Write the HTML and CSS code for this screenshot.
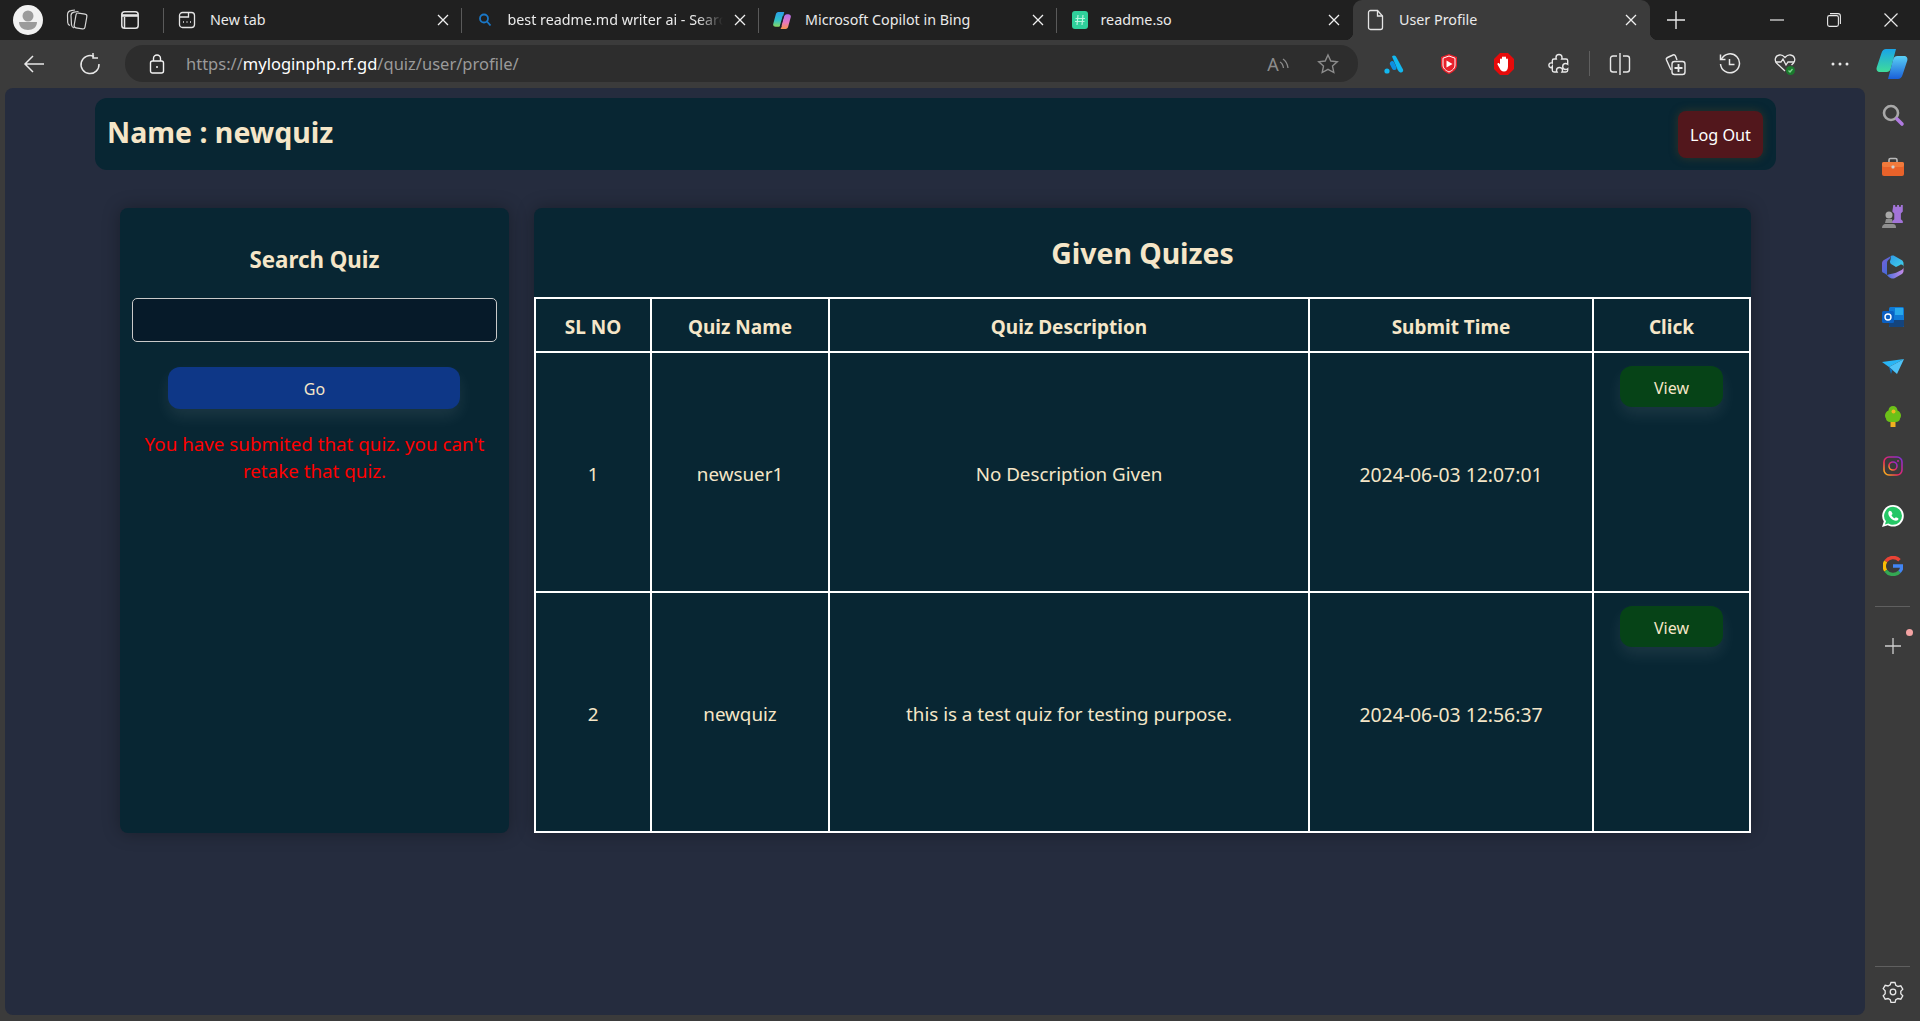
FILE: index.html
```html
<!DOCTYPE html>
<html>
  <head>
    <meta charset="utf-8" />
    <title>User Profile</title>
    <meta name="viewport" content="width=device-width, initial-scale=1" />
    <link rel="stylesheet" href="styles.css">
  </head>
  <body>
    <div class="browser">
      <!-- Tab strip -->
      <div class="tabbar">
        <div class="win-left">
          <svg width="30" height="30" viewBox="0 0 30 30"><circle cx="15" cy="15" r="15" fill="#f2f2f2"/><circle cx="15" cy="11" r="5.5" fill="#9b9b9b"/><path d="M6 17h18c0 5-4 8-9 8s-9-3-9-8z" fill="#9b9b9b"/></svg>
          <svg width="24" height="24" viewBox="0 0 24 24" fill="none" stroke="#d6d6d6" stroke-width="1.2"><rect x="10" y="5.500" width="11" height="15" rx="2.200" transform="rotate(10 15.500 13)"/><path d="M9 20C7.500 19.500 6.800 18.500 6.500 17L6 7.500C6 5.500 7.500 4.500 9 4.200L13.500 3.500"/><path d="M5 17.500C3.500 17 2.800 16 2.700 14.500L2.500 7C2.500 4.500 4 3 6 2.700L10 2"/></svg>
          <svg width="22" height="22" viewBox="0 0 22 22" fill="none" stroke="#e4e4e4" stroke-width="1.500"><rect x="2.800" y="2.800" width="16.400" height="16.400" rx="2.800"/><path d="M3 6.500h16" stroke-width="2.600"/><path d="M5.500 8v11"/></svg>
        </div>

        <div class="tab-sep"></div>
        <div class="tab">
          <svg class="tab-icon" width="18" height="18" viewBox="0 0 18 18" fill="none" stroke="#e4e4e4" stroke-width="1.3"><rect x="1.5" y="1.5" width="15" height="15" rx="3"/><path d="M1.5 6h9V1.5"/><path d="M5 11h1M8.5 11h1M12 11h1" stroke-width="1.6"/></svg>
          <span class="tab-title">New tab</span>
          <span class="tab-close"><svg width="12" height="12" viewBox="0 0 12 12" stroke="#f0f0f0" stroke-width="1.3"><path d="M1 1l10 10M11 1 1 11"/></svg></span>
        </div>

        <div class="tab-sep"></div>
        <div class="tab">
          <svg class="tab-icon" width="18" height="18" viewBox="0 0 18 18" fill="none" stroke="#1a78c8" stroke-width="1.8"><circle cx="8" cy="7.5" r="4"/><path d="M11 10.5l3.5 4"/></svg>
          <span class="tab-title tab-title-fade">best readme.md writer ai - Search</span>
          <span class="tab-close"><svg width="12" height="12" viewBox="0 0 12 12" stroke="#f0f0f0" stroke-width="1.3"><path d="M1 1l10 10M11 1 1 11"/></svg></span>
        </div>

        <div class="tab-sep"></div>
        <div class="tab">
          <svg class="tab-icon" width="21" height="21" viewBox="0 0 20 20">
            <defs>
              <linearGradient id="cp1" x1="0" y1="0" x2="0" y2="1"><stop offset="0" stop-color="#2a9fe8"/><stop offset=".55" stop-color="#2fc0c8"/><stop offset="1" stop-color="#8ad860"/></linearGradient>
              <linearGradient id="cp2" x1="0" y1="0" x2="0" y2="1"><stop offset="0" stop-color="#b06ee8"/><stop offset=".55" stop-color="#e878c0"/><stop offset="1" stop-color="#f7954a"/></linearGradient>
            </defs>
            <path d="M14 19.500H8.500l3.500-13C12.500 4.500 13.500 3 15.500 3H17c2 0 3.300 1.500 2.700 3.500L17 16.500C16.500 18.500 15.500 19.500 14 19.500z" fill="url(#cp2)"/>
            <path d="M6 .5h6.500L9 13.500C8.500 15.500 7.500 17 5.500 17H3C1 17 -.3 15.500 .3 13.500L3 3.500C3.500 1.500 4.500 .5 6 .5z" fill="url(#cp1)"/>
            <path d="M11.500 5 8.500 15.500c-.3 1 .2 1.500 1 1.500" fill="none" stroke="#1a1a2a" stroke-width="1.400"/>
          </svg>
          <span class="tab-title">Microsoft Copilot in Bing</span>
          <span class="tab-close"><svg width="12" height="12" viewBox="0 0 12 12" stroke="#f0f0f0" stroke-width="1.3"><path d="M1 1l10 10M11 1 1 11"/></svg></span>
        </div>

        <div class="tab-sep"></div>
        <div class="tab tab-readme">
          <svg class="tab-icon" width="16" height="18" viewBox="0 0 16 18"><rect width="16" height="18" rx="3" fill="#2fd09b"/><path d="M6 4 5 14M11 4l-1 10M3.500 7.500h9.500M3 10.500h9.500" stroke="#b5f3dd" stroke-width="1.2"/></svg>
          <span class="tab-title">readme.so</span>
          <span class="tab-close"><svg width="12" height="12" viewBox="0 0 12 12" stroke="#f0f0f0" stroke-width="1.3"><path d="M1 1l10 10M11 1 1 11"/></svg></span>
        </div>

        <div class="tab tab-active">
          <svg class="tab-icon" width="18" height="22" viewBox="0 0 18 22" fill="none" stroke="#e4e4e4" stroke-width="1.3"><path d="M3.500 1.500h7l5 5.500v11.500c0 1-.8 2-2 2h-10c-1.200 0-2-1-2-2v-15c0-1 .8-2 2-2z"/><path d="M10.500 1.500V7h5"/></svg>
          <span class="tab-title">User Profile</span>
          <span class="tab-close"><svg width="12" height="12" viewBox="0 0 12 12" stroke="#f0f0f0" stroke-width="1.3"><path d="M1 1l10 10M11 1 1 11"/></svg></span>
        </div>

        <div class="new-tab">
          <svg width="18" height="18" viewBox="0 0 18 18" stroke="#e8e8e8" stroke-width="1.4"><path d="M9 0v18M0 9h18"/></svg>
        </div>

        <div class="win-controls">
          <span><svg width="14" height="14" viewBox="0 0 14 14" stroke="#e8e8e8" stroke-width="1.2"><path d="M0 7h14"/></svg></span>
          <span><svg width="14" height="14" viewBox="0 0 14 14" fill="none" stroke="#e8e8e8" stroke-width="1.1"><rect x=".6" y="2.600" width="10.800" height="10.800" rx="1.800"/><path d="M3 .6h8c1.500 0 2.400 1 2.400 2.400v8"/></svg></span>
          <span><svg width="14" height="14" viewBox="0 0 14 14" stroke="#e8e8e8" stroke-width="1.2"><path d="M.5.5l13 13M13.500.5l-13 13"/></svg></span>
        </div>
      </div>

      <!-- Address bar and extensions -->
      <div class="toolbar">
        <div class="nav-slot nav-back">
          <svg width="22" height="20" viewBox="0 0 22 20" fill="none" stroke="#e8e8e8" stroke-width="1.5"><path d="M21 10H2M10 2l-8 8 8 8"/></svg>
        </div>
        <div class="nav-slot nav-reload">
          <svg width="22" height="22" viewBox="0 0 22 22" fill="none" stroke="#e8e8e8" stroke-width="1.5"><path d="M15 3.500A9 9 0 1 0 20 11"/><path d="M14 0v5h5"/></svg>
        </div>

        <div class="address">
          <svg class="address-lock" width="16" height="20" viewBox="0 0 16 20" fill="none" stroke="#f2f2f2" stroke-width="1.4"><rect x="1.500" y="7" width="13" height="12" rx="2"/><path d="M4.500 7V4.500a3.500 3.500 0 0 1 7 0V7"/><circle cx="8" cy="13" r="1" fill="#f2f2f2" stroke="none"/></svg>
          <span class="url">https://<b>myloginphp.rf.gd</b>/quiz/user/profile/</span>
          <span class="address-action">
            <span class="read-aloud">A</span>
            <svg width="10" height="14" viewBox="0 0 10 14" fill="none" stroke="#8c8c8c" stroke-width="1.300"><path d="M1 5c2 1 3 3 3.500 6M4 2c3 2 4.500 5 5 9"/></svg>
          </span>
          <span class="address-action">
            <svg width="22" height="22" viewBox="0 0 22 22" fill="none" stroke="#8c8c8c" stroke-width="1.400"><path d="M11 2l2.800 6 6.500.7-4.800 4.400 1.300 6.400L11 16.300l-5.800 3.200 1.300-6.400L1.700 8.700 8.200 8z"/></svg>
          </span>
        </div>

        <div class="ext-slot">
          <svg width="20" height="22" viewBox="0 0 20 22"><path d="M8 3.500c1-1.500 3-1.500 4 0l7 13c1 2-1.500 4-3.500 2.500-1-.8-1.500-1.500-2-2.500z" fill="#12b8f0"/><path d="M6.500 9c1-1.500 3-1 3.800.5l2 4.500c.7 2-.5 3.500-2.500 3-1-.3-1.500-1-2-2l-1.800-3.500c-.4-.8-.2-1.700.5-2.500z" fill="#0c8fe0"/><circle cx="3" cy="18" r="2.600" fill="#12b8f0"/></svg>
        </div>
        <div class="ext-slot">
          <svg width="18" height="22" viewBox="0 0 18 22"><path d="M9 1l8 3v8c0 4-3 7-8 9-5-2-8-5-8-9V4z" fill="#e8202a"/><path d="M9 3l6 2.200V12c0 3-2.200 5.300-6 7-3.800-1.700-6-4-6-7V5.200z" fill="none" stroke="#fff" stroke-width="1"/><path d="M6.500 7.500v7l6-3.500z" fill="#fff"/></svg>
        </div>
        <div class="ext-slot">
          <svg width="22" height="24" viewBox="0 0 22 24"><path d="M7 1h8l6 6v10l-6 6H7l-6-6V7z" fill="#e60a0a"/><path d="M7 12V7.500a1 1 0 0 1 2 0V5.500a1 1 0 0 1 2 0v0a1 1 0 0 1 2 0v2a1 1 0 0 1 2 0v7c0 3-1.500 5-4 5s-3.500-1.500-4.500-3.500L4.500 12.500c-.5-1 1-2 1.700-1z" fill="#fff"/></svg>
        </div>
        <div class="ext-slot">
          <svg width="22" height="22" viewBox="0 0 22 22" fill="none" stroke="#e8e8e8" stroke-width="1.400"><path d="M8 4.500C8 2.500 9.500 1.500 11 1.500s3 1 3 3c0 .5 0 1-.3 1.500H18c1 0 1.700.7 1.700 1.700v3.600c-.8-.6-1.300-.8-2-.8-1.700 0-3 1.300-3 3s1.300 3 3 3c.7 0 1.200-.2 2-.8v1.600c0 1-.7 1.700-1.700 1.700h-4c.4-.6.500-1 .5-1.700 0-1.600-1.300-2.800-3-2.800s-3 1.200-3 2.800c0 .7.100 1.100.5 1.700H6c-1 0-1.700-.7-1.700-1.700v-4C3.500 14.600 3 15 2.500 14.500 1 14 .8 12.500 1 11.500c.3-1.200 1.500-2 3.300-1.500V7.700C4.300 6.700 5 6 6 6h2.300C8.100 5.500 8 5 8 4.500z"/></svg>
        </div>
        <div class="toolbar-sep"></div>
        <div class="ext-slot">
          <svg width="22" height="22" viewBox="0 0 22 22" fill="none" stroke="#e8e8e8" stroke-width="1.400"><path d="M8 3H4C2.500 3 1.500 4 1.500 5.500v11C1.500 18 2.500 19 4 19h4M14 3h4c1.500 0 2.500 1 2.500 2.500v11c0 1.500-1 2.500-2.500 2.500h-4M11 0v22"/></svg>
        </div>
        <div class="ext-slot">
          <svg width="24" height="24" viewBox="0 0 24 24" fill="none" stroke="#e8e8e8" stroke-width="1.400"><path d="M8 18 3.500 8c-.5-1.200 0-2 1-2.500L10 3c1-.4 2 0 2.500 1l1.500 4"/><rect x="9" y="9.500" width="13" height="13" rx="2.500"/><path d="M15.500 12v8M11.500 16h8" stroke-width="1.800"/></svg>
        </div>
        <div class="ext-slot">
          <svg width="22" height="22" viewBox="0 0 22 22" fill="none" stroke="#e8e8e8" stroke-width="1.500"><path d="M2.500 6A9.500 9.500 0 1 1 1.500 11"/><path d="M1.500 1.500v5h5M10.500 6v5.500h5"/></svg>
        </div>
        <div class="ext-slot">
          <svg width="24" height="24" viewBox="0 0 24 24" fill="none" stroke="#e8e8e8" stroke-width="1.300"><path d="M12 19 3.500 11C1 8 2.500 3.500 6.500 3c2.300-.3 4 .8 5.500 2.500C13.500 3.800 15.200 2.700 17.500 3c4 .5 5.500 5 3 8l-2 2"/><path d="M2.500 10H8l2-3 3 6 2-3h6"/><circle cx="17.500" cy="18.500" r="4.500" fill="#1a7a2d" stroke="none"/><path d="M15.500 18.500l1.500 1.500 2.500-3" stroke="#7fd48f"/></svg>
        </div>
        <div class="ext-slot">
          <svg width="18" height="4" viewBox="0 0 18 4" fill="#e8e8e8"><circle cx="2" cy="2" r="1.500"/><circle cx="9" cy="2" r="1.500"/><circle cx="16" cy="2" r="1.500"/></svg>
        </div>
        <div class="copilot-slot">
          <svg width="32" height="32" viewBox="0 0 32 32">
            <defs>
              <linearGradient id="cp3" x1="0" y1="0" x2="0" y2="1"><stop offset="0" stop-color="#19a4e8"/><stop offset="1" stop-color="#3fdc9a"/></linearGradient>
              <linearGradient id="cp4" x1="0" y1="0" x2="0" y2="1"><stop offset="0" stop-color="#5ad0f5"/><stop offset="1" stop-color="#1a5fd8"/></linearGradient>
            </defs>
            <path d="M10 1h10l-5 19c-.7 2.500-2 4-4.500 4H4C1.500 24 0 22 .7 19.500L5.500 5C6.300 2.500 8 1 10 1z" fill="url(#cp3)"/>
            <path d="M22 31H12l5-19c.7-2.500 2-4 4.500-4H28c2.500 0 4 2 3.300 4.500L26.500 27C25.700 29.500 24 31 22 31z" fill="url(#cp4)"/>
          </svg>
        </div>
      </div>

      <div class="viewport">
        <!-- The profile page -->
        <main class="page">
          <header class="user-bar">
            <h1>Name : newquiz</h1>
            <button class="btn btn-logout">Log Out</button>
          </header>

          <div class="columns">
            <section class="card search-card">
              <h3>Search Quiz</h3>
              <input class="search-input" type="text" />
              <button class="btn btn-go">Go</button>
              <p class="error">You have submited that quiz. you can't retake that quiz.</p>
            </section>

            <section class="card quiz-card">
              <h2>Given Quizes</h2>
              <table>
                <colgroup>
                  <col class="col-sl" />
                  <col class="col-name" />
                  <col class="col-desc" />
                  <col class="col-time" />
                  <col class="col-click" />
                </colgroup>
                <thead>
                  <tr>
                    <th>SL NO</th>
                    <th>Quiz Name</th>
                    <th>Quiz Description</th>
                    <th>Submit Time</th>
                    <th>Click</th>
                  </tr>
                </thead>
                <tbody>
                  <tr>
                    <td>1</td>
                    <td>newsuer1</td>
                    <td>No Description Given</td>
                    <td class="cell-time">2024-06-03 12:07:01</td>
                    <td class="cell-action"><button class="btn btn-view">View</button></td>
                  </tr>
                  <tr>
                    <td>2</td>
                    <td>newquiz</td>
                    <td>this is a test quiz for testing purpose.</td>
                    <td class="cell-time">2024-06-03 12:56:37</td>
                    <td class="cell-action"><button class="btn btn-view">View</button></td>
                  </tr>
                </tbody>
              </table>
            </section>
          </div>
        </main>

        <!-- Edge sidebar -->
        <aside class="sidebar">
          <div class="side-slot side-search">
            <svg width="24" height="24" viewBox="0 0 24 24" fill="none"><circle cx="10" cy="10" r="7" stroke="#a8a8a8" stroke-width="2.600"/><path d="M16 16l5 5" stroke="#b07ae0" stroke-width="3.600" stroke-linecap="round"/></svg>
          </div>
          <div class="side-slot">
            <svg width="24" height="20" viewBox="0 0 24 20"><path d="M8 5V3c0-1 .7-1.500 1.500-1.500h5C15.300 1.500 16 2 16 3v2" fill="none" stroke="#b9b9b9" stroke-width="1.600"/><rect x="1" y="5" width="22" height="14" rx="2" fill="#e8622a"/><rect x="1" y="5" width="22" height="5" rx="2" fill="#f07a3c"/><rect x="10.500" y="8.500" width="3" height="3" rx="1" fill="#d0d0d0"/></svg>
          </div>
          <div class="side-slot">
            <svg width="24" height="24" viewBox="0 0 24 24"><circle cx="8" cy="10" r="3.500" fill="#a8a8a8"/><path d="M5 14h6l1 4H4zM1 23c0-3 2-4 3-4h8c2 0 3 1 3 4z" fill="#8e8e8e"/><path d="M14 1h2v2h2V1h2v2h2V1h2v7l-2 2v6l2 2v2H13v-2l2-2v-6l-2-2z" transform="translate(-1 -1) scale(.95)" fill="#a274d8"/></svg>
          </div>
          <div class="side-slot">
            <svg width="22" height="24" viewBox="0 0 22 24">
              <defs>
                <linearGradient id="m1" x1="0" y1="0" x2="1" y2="1"><stop offset="0" stop-color="#7d5fd8"/><stop offset="1" stop-color="#2f6fd8"/></linearGradient>
                <linearGradient id="m2" x1="0" y1="0" x2="1" y2="1"><stop offset="0" stop-color="#2f9be8"/><stop offset="1" stop-color="#3fd0e8"/></linearGradient>
                <linearGradient id="m3" x1="0" y1="0" x2="1" y2="0"><stop offset="0" stop-color="#4a6fe0"/><stop offset="1" stop-color="#c58ae8"/></linearGradient>
              </defs>
              <path d="M9 1 2 5C1 5.600 0 7 0 8v8c0 1 1 2 2 2l3 2V8c0-2 1-3 2.500-4z" fill="url(#m1)"/>
              <path d="M9 1c1-.6 2.500-.6 3.500 0l7 4c1.200.7 2 2 2 3v4c0-2-2-3-3.500-2l-4 2-5-3c-1-.7-1.500-3-.5-4z" fill="url(#m2)"/>
              <path d="M5 20c0 .5 2 2.500 4 3.200 1 .5 2.500.5 3.500 0l7-4c1.200-.7 2-2 2-3v-4c0 2-2 3-3.500 3.500l-4 2c-2 1-6 1-9 2.300z" fill="url(#m3)"/>
            </svg>
          </div>
          <div class="side-slot">
            <svg width="22" height="20" viewBox="0 0 22 20"><rect x="7" y="0" width="15" height="20" rx="1.500" fill="#0f78d4"/><path d="M13 1h8v7h-8z" fill="#28a8ea"/><path d="M7 13h15v5.500c0 .8-.7 1.500-1.500 1.500H8.500C7.700 20 7 19.300 7 18.500z" fill="#14447d"/><rect x="0" y="4" width="12" height="12" rx="1.500" fill="#0a5fc2"/><circle cx="6" cy="10" r="3" fill="none" stroke="#fff" stroke-width="1.400"/></svg>
          </div>
          <div class="side-slot">
            <svg width="22" height="16" viewBox="0 0 22 16"><path d="M0 3 22 0 7 8z" fill="#29b6f6"/><path d="M22 0 15 15 7 8z" fill="#4fc3f7"/><path d="M7 8l3.500 3L9 15z" fill="#0d6db8"/></svg>
          </div>
          <div class="side-slot side-tree">
            <svg width="18" height="22" viewBox="0 0 18 22"><rect x="6.500" y="15" width="5" height="6" fill="#f0b020"/><path d="M9 0c2.500 0 4.500 2 4.500 4.500 2 .5 3.500 3 3.500 5s-1 3-1 3c0 2-2 3.500-4 3.500H6c-2 0-4-1.500-4-3.500 0 0-1-1-1-3s1.500-4.500 3.500-5C4.500 2 6.500 0 9 0z" fill="#6cc018"/><circle cx="9.500" cy="5.500" r="2" fill="#f2b820"/></svg>
          </div>
          <div class="side-slot">
            <svg width="20" height="20" viewBox="0 0 20 20" fill="none">
              <defs><linearGradient id="ig" x1="0" y1="1" x2="1" y2="0"><stop offset="0" stop-color="#fdc70f"/><stop offset=".4" stop-color="#f0265f"/><stop offset="1" stop-color="#7a2ee0"/></linearGradient></defs>
              <rect x="1" y="1" width="18" height="18" rx="5" stroke="url(#ig)" stroke-width="1.600"/>
              <circle cx="10" cy="10" r="4" stroke="url(#ig)" stroke-width="1.600"/>
              <circle cx="15" cy="5" r="1" fill="#c02aa0"/>
            </svg>
          </div>
          <div class="side-slot">
            <svg width="22" height="22" viewBox="0 0 22 22"><path d="M11 0a10.800 10.800 0 0 1 0 21.600c-1.900 0-3.700-.5-5.200-1.400L0 22l1.800-5.600A10.800 10.800 0 0 1 11 0z" fill="#fff"/><path d="M11 1.800a9 9 0 0 1 0 18c-1.700 0-3.300-.5-4.700-1.300l-3.400 1.100 1.100-3.300A9 9 0 0 1 11 1.800z" fill="#25c766"/><path d="M7.800 5.800c-.5 0-1.500 1-1.500 2.500 0 3.300 4 7.500 7.700 7.500 1.400 0 2.500-1 2.500-2 0-.5-2.300-1.500-2.600-1.500-.4 0-.8 1-1.200 1-.8 0-3.200-2.300-3.200-3.100 0-.4 1-.8 1-1.200 0-.4-1-2.700-1.500-2.700z" fill="#fff"/></svg>
          </div>
          <div class="side-slot">
            <svg width="20" height="20" viewBox="0 0 20 20" fill="none" stroke-width="3.400">
              <path d="M16.500 4.200A9 9 0 0 0 2.700 5.300" stroke="#ea4335"/>
              <path d="M2.700 5.300a9 9 0 0 0 0 9.400" stroke="#fbbc05"/>
              <path d="M2.700 14.700a9 9 0 0 0 13.800 1" stroke="#34a853"/>
              <path d="M16.500 15.700c1.700-1.500 2.400-3.500 2.400-5.700H10" stroke="#4285f4"/>
            </svg>
          </div>
          <div class="side-divider side-divider-top"></div>
          <div class="side-slot side-add">
            <svg width="16" height="16" viewBox="0 0 16 16" stroke="#cfcfcf" stroke-width="1.300"><path d="M8 0v16M0 8h16"/></svg>
            <span class="side-dot"></span>
          </div>
          <div class="side-spacer"></div>
          <div class="side-divider"></div>
          <div class="side-slot">
            <svg width="22" height="22" viewBox="0 0 22 22" fill="none" stroke="#e8e8e8" stroke-width="1.300"><path d="M9 1.500h4l.8 2.800 2.200 1.200 2.800-.7 2 3.400-2 2.100v2.400l2 2.100-2 3.400-2.800-.7-2.200 1.200-.8 2.800H9l-.8-2.800-2.200-1.200-2.800.7-2-3.400 2-2.100V9.800l-2-2.100 2-3.400 2.800.7 2.200-1.200z"/><circle cx="11" cy="11" r="2.800"/></svg>
          </div>
        </aside>
      </div>
    </div>
  </body>
</html>
```

FILE: styles.css
```css
/* Basics */
html,
body {
  margin: 0;
  padding: 0;
  height: 100%;
  overflow: hidden;
}
* {
  box-sizing: border-box;
}
body {
  background: #3b3b3b;
  font-family: "Noto Sans", "Open Sans", Arial, sans-serif;
}

/* Browser frame */
.browser {
  display: flex;
  flex-direction: column;
  height: 1021px;
  width: 1920px;
}
.tabbar {
  display: flex;
  align-items: center;
  height: 40px;
  background: #202020;
  color: #eaeaea;
  font-size: 14.3px;
}
.win-left {
  display: grid;
  grid-template-columns: 56px 42px 64px;
  justify-items: center;
  align-items: center;
  width: 163px;
}
.tab-sep {
  width: 1px;
  height: 25px;
  background: #5a5a5a;
}
.tab {
  display: flex;
  align-items: center;
  width: 296.5px;
  height: 40px;
  padding: 0 9px 0 14px;
  position: relative;
}
.tab-icon {
  flex: 0 0 18px;
}
.tab-title {
  flex: 1;
  margin: 0 8px 0 14px;
  padding-bottom: 2px;
  white-space: nowrap;
  overflow: hidden;
}
.tab-title-fade {
  -webkit-mask-image: linear-gradient(to right, #000 88%, transparent 100%);
  mask-image: linear-gradient(to right, #000 88%, transparent 100%);
}
.tab-readme .tab-title {
  margin-left: 12px;
}
.tab-readme .tab-close {
  margin-right: 1px;
}
.tab-close {
  display: flex;
  justify-content: center;
  flex: 0 0 18px;
}
.tab-active {
  padding-right: 10px;
  background: #3b3b3b;
  border-radius: 9px 9px 0 0;
}
.tab-active::before,
.tab-active::after {
  content: "";
  position: absolute;
  bottom: 0;
  width: 8px;
  height: 8px;
}
.tab-active::before {
  left: -8px;
  background: radial-gradient(circle at 0 0, transparent 8px, #3b3b3b 8.5px);
}
.tab-active::after {
  right: -8px;
  background: radial-gradient(circle at 100% 0, transparent 8px, #3b3b3b 8.5px);
}
.new-tab {
  display: flex;
  justify-content: center;
  width: 52px;
}
.win-controls {
  display: grid;
  grid-template-columns: 57px 57px 58px;
  justify-items: center;
  margin-left: auto;
}
.win-controls span {
  display: flex;
}

/* Toolbar */
.toolbar {
  display: flex;
  align-items: center;
  height: 48px;
  padding-bottom: 1px;
  background: #3b3b3b;
}
.nav-slot {
  display: flex;
  justify-content: center;
}
.nav-back {
  width: 68px;
}
.nav-reload {
  width: 44px;
  margin-right: 13px;
}
.address {
  display: flex;
  align-items: center;
  width: 1233px;
  height: 37px;
  padding: 0 5px 0 24px;
  margin-right: 8px;
  border-radius: 18px;
  background: #2d2d2d;
  color: #9a9a9a;
  font-size: 16.5px;
}
.address-lock {
  flex: 0 0 16px;
}
.url {
  flex: 1;
  margin-left: 21px;
  padding-bottom: 1px;
}
.url b {
  color: #fff;
  font-weight: 400;
}
.address-action {
  display: flex;
  align-items: center;
  justify-content: center;
  width: 50px;
}
.read-aloud {
  color: #8c8c8c;
  font-size: 18px;
  line-height: 22px;
}
.ext-slot {
  display: flex;
  justify-content: center;
  width: 55px;
}
.toolbar-sep {
  width: 1px;
  height: 25px;
  margin: 0 2px 0 3px;
  background: #5f5f5f;
}
.copilot-slot {
  display: flex;
  justify-content: center;
  width: 50px;
}

/* Viewport with page and edge sidebar */
.viewport {
  display: flex;
  flex: 1;
  min-height: 0;
}
.page {
  flex: 1;
  margin: 0 0 6px 5px;
  padding-top: 10px;
  border-radius: 8px;
  background: #252c3e;
  color: #f5e6c8;
}
.sidebar {
  display: flex;
  flex-direction: column;
  flex: 0 0 55px;
  padding: 2px 0 4px;
}
.side-slot {
  display: flex;
  align-items: center;
  justify-content: center;
  flex: 0 0 50px;
  position: relative;
}
.side-search {
  margin-bottom: 2px;
}
.side-tree {
  margin-bottom: -1px;
}
.side-divider {
  flex: 0 0 1px;
  width: 35px;
  margin: 0 auto;
  background: #5f5f5f;
}
.side-divider-top {
  margin-top: 15px;
  margin-bottom: 14px;
}
.side-spacer {
  flex: 1;
}
.side-dot {
  position: absolute;
  top: 8px;
  right: 7px;
  width: 7px;
  height: 7px;
  border-radius: 50%;
  background: #f4a3a3;
}

/* Profile page */
.user-bar {
  display: flex;
  align-items: center;
  justify-content: space-between;
  width: 1681px;
  height: 72px;
  margin-left: 90px;
  padding: 0 13px 0 12px;
  border-radius: 12px;
  background: #082633;
}
h1 {
  margin: 0 0 4px;
  font-size: 28.5px;
  font-weight: 700;
}
.columns {
  display: flex;
  gap: 25px;
  width: 1631px;
  height: 625px;
  margin: 38px 0 0 115px;
}
.card {
  border-radius: 8px;
  background: #082633;
  box-shadow: 0 0 18px rgba(0, 0, 0, 0.3);
}
.search-card {
  display: flex;
  flex-direction: column;
  align-items: center;
  width: 389px;
  padding: 0 12px;
}
.search-card h3 {
  margin: 36px 0 22px;
  font-size: 22.3px;
  line-height: 32px;
  font-weight: 700;
}
.search-input {
  width: 365px;
  height: 44px;
  border: 1px solid #c9c9c9;
  border-radius: 5px;
  background: #061a29;
}
.btn {
  display: block;
  border: 0;
  font-family: inherit;
}
.btn-go {
  width: 292px;
  height: 42px;
  margin: 25px 2px 0 0;
  padding: 2px 0 0 2px;
  border-radius: 12px;
  background: #0e3787;
  color: #f5e6c8;
  font-size: 16px;
  box-shadow: 0 8px 16px rgba(255, 255, 255, 0.08);
}
.btn-logout {
  width: 85px;
  height: 47px;
  padding-top: 2px;
  border-radius: 8px;
  background: #52171c;
  color: #fff;
  font-size: 16.2px;
  box-shadow: 0 0 10px rgba(120, 80, 20, 0.35);
}
.btn-view {
  width: 103px;
  height: 41px;
  margin: 0 auto;
  padding-top: 4px;
  border-radius: 12px;
  background: #064317;
  color: #f5e6c8;
  font-size: 16px;
  box-shadow: 0 8px 16px rgba(255, 255, 255, 0.08);
}
.error {
  margin: 22px 0 0;
  color: #f00;
  font-size: 18.8px;
  line-height: 27px;
  text-align: center;
}
.quiz-card {
  width: 1217px;
}
.quiz-card h2 {
  display: flex;
  align-items: center;
  justify-content: center;
  height: 89px;
  margin: 0;
  padding-top: 1px;
  font-size: 28.4px;
  font-weight: 700;
}

/* Table */
table {
  width: 1215px;
  table-layout: fixed;
  border-collapse: collapse;
  border: 2px solid #fff;
}
.col-sl {
  width: 116px;
}
.col-name {
  width: 178px;
}
.col-desc {
  width: 480px;
}
.col-time {
  width: 284px;
}
.col-click {
  width: 157px;
}
th,
td {
  padding: 4px 0 0;
  border: 2px solid #fff;
  text-align: center;
}
th {
  height: 54px;
  font-size: 19px;
  font-weight: 700;
}
td {
  height: 240px;
  font-size: 18.8px;
}
.cell-time {
  font-size: 19.4px;
}
.cell-action {
  vertical-align: top;
  padding-top: 13px;
}
```
